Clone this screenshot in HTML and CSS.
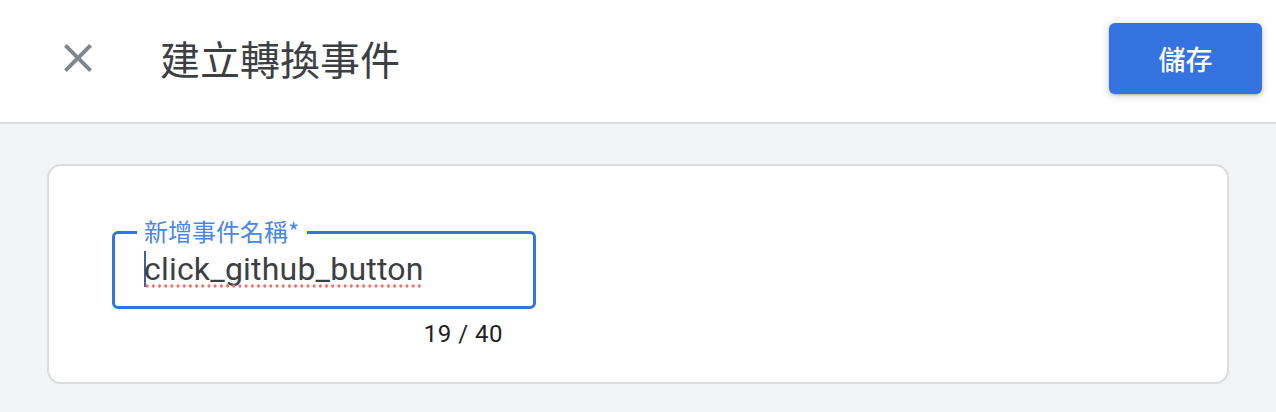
FILE: index.html
```html
<!DOCTYPE html>
<html lang="zh-Hant">
<head>
<meta charset="utf-8">
<link rel="stylesheet" href="styles.css">
</head>
<body>
<header class="topbar">
  <button class="close-btn" aria-label="關閉">
    <svg viewBox="0 0 24 24" width="48" height="48"><path d="M19 6.41 17.59 5 12 10.59 6.41 5 5 6.41 10.59 12 5 17.59 6.41 19 12 13.41 17.59 19 19 17.59 13.41 12z" fill="#80868b"/></svg>
  </button>
  <h1 class="title">建立轉換事件</h1>
  <button class="save-btn">儲存</button>
</header>
<main class="content">
  <section class="card">
    <div class="field">
      <div class="outline">
        <span class="label">新增事件名稱*</span>
        <div class="value"><span class="caret"></span><span class="typo">click_github_button</span></div>
      </div>
      <div class="counter">19 / 40</div>
    </div>
  </section>
</main>
</body>
</html>
```
FILE: styles.css
```css
* { box-sizing: border-box; }
html, body { margin: 0; padding: 0; }
body {
  width: 1276px;
  height: 412px;
  overflow: hidden;
  background: #f1f3f4;
  font-family: Roboto, "Noto Sans CJK TC", sans-serif;
}
.topbar {
  height: 124px;
  background: #fff;
  border-bottom: 2px solid #dadce0;
  display: flex;
  align-items: center;
  padding: 0 14px 0 54px;
}
.close-btn {
  width: 48px;
  height: 48px;
  padding: 0;
  border: 0;
  background: none;
  display: flex;
  margin-top: -6px;
}
.title {
  margin: -6px 0 0 58px;
  font-family: "Noto Sans CJK TC", sans-serif;
  font-weight: 400;
  font-size: 40px;
  color: #3c4043;
  flex: 1;
}
.save-btn {
  width: 153px;
  height: 71px;
  margin-top: -6px;
  border: 0;
  border-radius: 6px;
  background: #3574e0;
  color: #fff;
  font-family: "Noto Sans CJK TC", sans-serif;
  font-size: 27px;
  font-weight: 500;
  box-shadow: 0 1px 2px rgba(60,64,67,.3), 0 2px 6px 2px rgba(60,64,67,.15);
}
.content {
  padding: 40px 47px 0;
}
.card {
  height: 220px;
  background: #fff;
  border: 2px solid #dadce0;
  border-radius: 14px;
  padding: 65px 0 0 63px;
}
.field {
  width: 424px;
}
.outline {
  position: relative;
  height: 78px;
  border: 3px solid #3574e0;
  border-radius: 6px;
  padding: 15px 0 0 29px;
}
.label {
  position: absolute;
  top: -18px;
  left: 22px;
  padding: 0 8px 0 7px;
  background: #fff;
  font-family: "Noto Sans CJK TC", sans-serif;
  font-size: 24px;
  line-height: 30px;
  color: #4a86e8;
}
.value {
  display: flex;
  align-items: center;
  font-size: 32px;
  line-height: 40px;
  letter-spacing: 0.2px;
  color: #3c4043;
}
.caret {
  width: 2px;
  height: 36px;
  background: #3c5fa8;
  margin-right: -2px;
}
.typo {
  position: relative;
}
.typo::after {
  content: "";
  position: absolute;
  left: 0;
  right: 0;
  bottom: 1px;
  height: 4px;
  background: radial-gradient(circle, #e8756a 1.4px, transparent 1.9px) repeat-x;
  background-size: 6.2px 4px;
}
.counter {
  text-align: right;
  padding-right: 33px;
  margin-top: 9px;
  font-size: 24px;
  line-height: 32px;
  letter-spacing: 0.5px;
  color: #202124;
}
```
